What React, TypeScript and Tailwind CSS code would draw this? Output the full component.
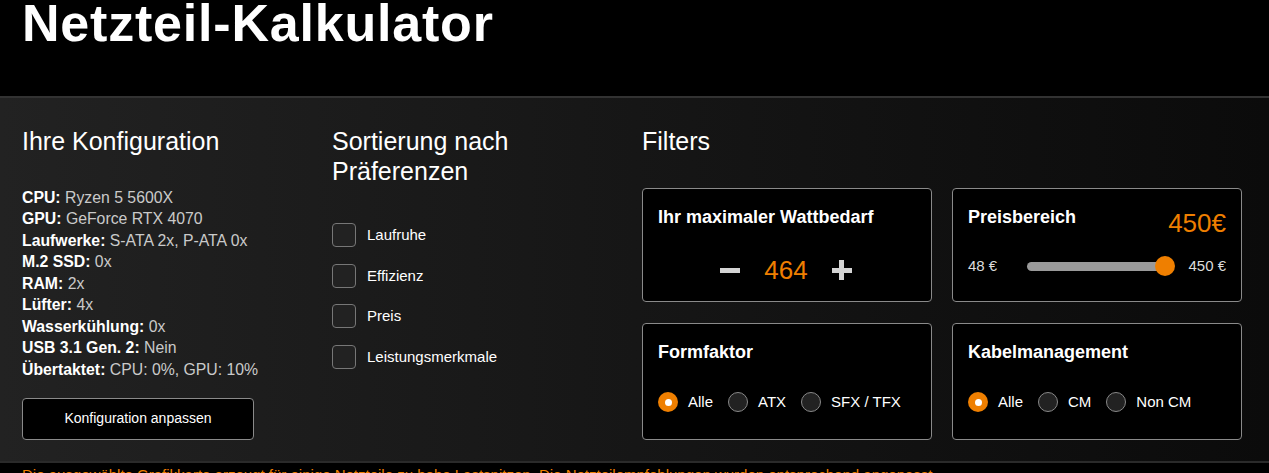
import React, { useState } from 'react';

const config = [
  { label: 'CPU:', value: 'Ryzen 5 5600X' },
  { label: 'GPU:', value: 'GeForce RTX 4070' },
  { label: 'Laufwerke:', value: 'S-ATA 2x, P-ATA 0x' },
  { label: 'M.2 SSD:', value: '0x' },
  { label: 'RAM:', value: '2x' },
  { label: 'Lüfter:', value: '4x' },
  { label: 'Wasserkühlung:', value: '0x' },
  { label: 'USB 3.1 Gen. 2:', value: 'Nein' },
  { label: 'Übertaktet:', value: 'CPU: 0%, GPU: 10%' },
];

const prefs = ['Laufruhe', 'Effizienz', 'Preis', 'Leistungsmerkmale'];

const Radio = ({ label, checked, onClick }: { label: string; checked: boolean; onClick: () => void }) => (
  <button onClick={onClick} className="flex items-center gap-[10px]">
    {checked ? (
      <span className="w-5 h-5 rounded-full bg-[#ef7f00] flex items-center justify-center">
        <span className="w-[7px] h-[7px] rounded-full bg-white" />
      </span>
    ) : (
      <span className="w-5 h-5 rounded-full bg-[#222] border border-[#888]" />
    )}
    <span className="text-[15px] text-white">{label}</span>
  </button>
);

const App = () => {
  const [watt, setWatt] = useState(464);
  const [form, setForm] = useState('Alle');
  const [cable, setCable] = useState('Alle');
  const [checked, setChecked] = useState<string[]>([]);

  const toggle = (p: string) =>
    setChecked(checked.includes(p) ? checked.filter(c => c !== p) : [...checked, p]);

  return (
    <div className="min-h-screen bg-black text-white font-['Liberation_Sans',Arial,sans-serif]">
      {/* Header */}
      <header className="h-[96px] px-[22px]">
        <h1 className="text-[52px] font-bold leading-[46px] tracking-[0.8px]">Netzteil-Kalkulator</h1>
      </header>

      <section className="border-t-2 border-b-2 border-t-[#323232] border-b-[#2a2a2a] bg-linear-to-r from-[#222222] via-[#161616] to-[#0b0b0b] pl-[22px] pt-[28px] pb-[21px] flex">
        {/* Konfiguration */}
        <div className="w-[310px]">
          <h2 className="text-[25px] leading-[30px]">Ihre Konfiguration</h2>
          <ul className="mt-[31px] text-[15.8px] leading-[21.43px]">
            {config.map(c => (
              <li key={c.label}>
                <span className="font-bold">{c.label}</span> <span className="text-[#cacaca]">{c.value}</span>
              </li>
            ))}
          </ul>
          <button className="mt-[18px] w-[232px] h-[42px] bg-black border border-[#8a8a8a] rounded-[4px] text-[14px] text-white">
            Konfiguration anpassen
          </button>
        </div>

        {/* Sortierung */}
        <div className="w-[310px]">
          <h2 className="text-[25px] leading-[30px]">
            Sortierung nach
            <br />
            Präferenzen
          </h2>
          <div className="mt-[29px] flex flex-col">
            {prefs.map(p => (
              <label key={p} className="flex items-center gap-[11px] h-[40.5px] cursor-pointer" onClick={() => toggle(p)}>
                <span
                  className={
                    'w-6 h-6 rounded-[4px] border border-[#777] flex items-center justify-center ' +
                    (checked.includes(p) ? 'bg-[#ef7f00]' : 'bg-[#222]')
                  }
                />
                <span className="text-[15px]">{p}</span>
              </label>
            ))}
          </div>
        </div>

        {/* Filters */}
        <div className="w-[600px]">
          <h2 className="text-[25px] leading-[30px]">Filters</h2>
          <div className="mt-[32px] grid grid-cols-2 gap-x-5 gap-y-[21px]">
            <div className="h-[114px] bg-black border border-[#8a8a8a] rounded-[4px] px-[15px] pt-[15px]">
              <h3 className="text-[18px] font-bold leading-[26px]">Ihr maximaler Wattbedarf</h3>
              <div className="mt-[25px] flex items-center justify-center gap-6 pr-[2px]">
                <button onClick={() => setWatt(watt - 1)} className="w-5 h-5 flex items-center justify-center">
                  <span className="w-5 h-[5px] bg-[#d4d4d4]" />
                </button>
                <span className="text-[26px] text-[#ef7f00] leading-[30px]">{watt}</span>
                <button onClick={() => setWatt(watt + 1)} className="w-5 h-5 relative">
                  <span className="absolute left-0 top-[7.5px] w-5 h-[5px] bg-[#d4d4d4]" />
                  <span className="absolute top-0 left-[7.5px] w-[5px] h-5 bg-[#d4d4d4]" />
                </button>
              </div>
            </div>

            <div className="h-[114px] bg-black border border-[#8a8a8a] rounded-[4px] px-[15px] pt-[15px]">
              <div className="flex items-start justify-between">
                <h3 className="text-[18px] font-bold leading-[26px]">Preisbereich</h3>
                <span className="text-[26px] text-[#ef7f00] leading-[30px] mt-[4px]">450€</span>
              </div>
              <div className="mt-[17px] flex items-center text-[15px] text-[#dcdcdc]">
                <span className="w-[59px]">48 €</span>
                <div className="relative w-[142px] h-[9px] rounded-full bg-[#9a9a9a]">
                  <span className="absolute right-[-6px] top-[-5.5px] w-5 h-5 rounded-full bg-[#ef7f00]" />
                </div>
                <span className="ml-auto">450 €</span>
              </div>
            </div>

            <div className="h-[117px] bg-black border border-[#8a8a8a] rounded-[4px] px-[15px] pt-[15px]">
              <h3 className="text-[18px] font-bold leading-[26px]">Formfaktor</h3>
              <div className="mt-[26px] flex items-center gap-[15px]">
                {['Alle', 'ATX', 'SFX / TFX'].map(o => (
                  <Radio key={o} label={o} checked={form === o} onClick={() => setForm(o)} />
                ))}
              </div>
            </div>

            <div className="h-[117px] bg-black border border-[#8a8a8a] rounded-[4px] px-[15px] pt-[15px]">
              <h3 className="text-[18px] font-bold leading-[26px]">Kabelmanagement</h3>
              <div className="mt-[26px] flex items-center gap-[15px]">
                {['Alle', 'CM', 'Non CM'].map(o => (
                  <Radio key={o} label={o} checked={cable === o} onClick={() => setCable(o)} />
                ))}
              </div>
            </div>
          </div>
        </div>
      </section>

      <p className="px-[22px] pt-[1px] text-[15px] leading-[21.43px] text-[#ef7f00]">
        Die ausgewählte Grafikkarte erzeugt für einige Netzteile zu hohe Lastspitzen. Die Netzteilempfehlungen wurden entsprechend angepasst.
      </p>
    </div>
  );
};

export default App;
